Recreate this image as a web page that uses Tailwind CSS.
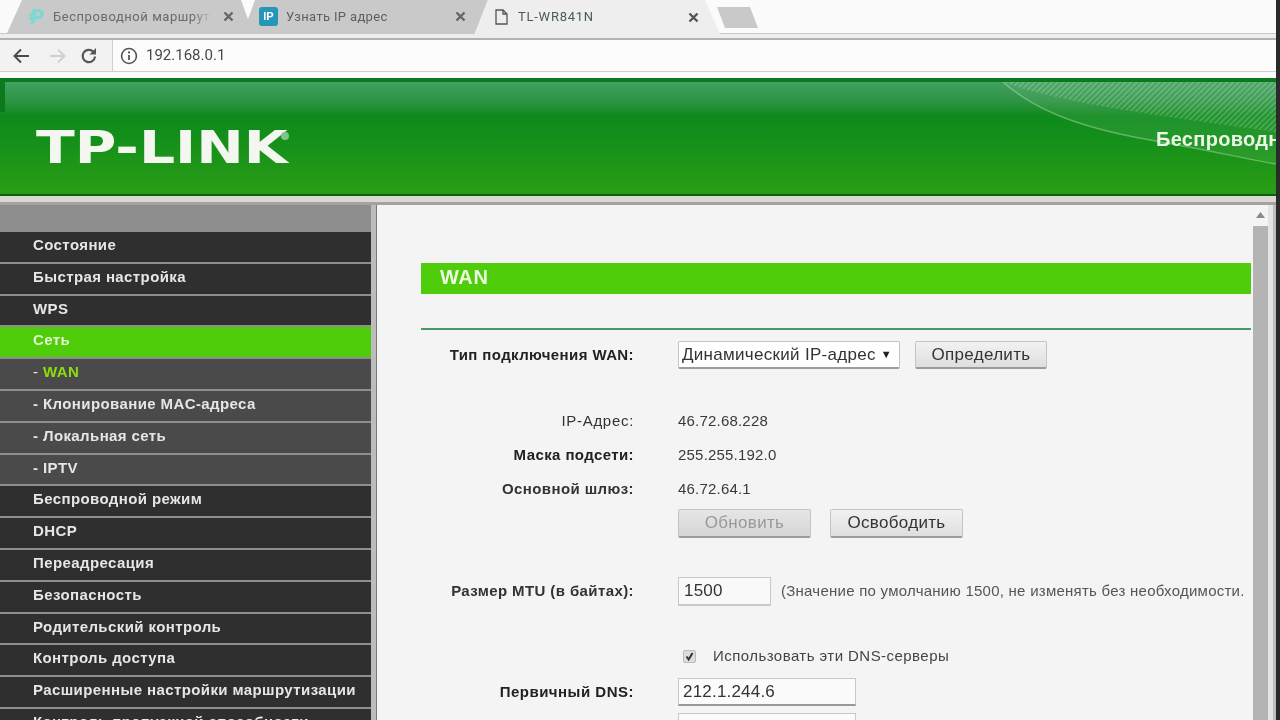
<!DOCTYPE html>
<html lang="ru">

<head>
    <meta charset="UTF-8">
    <script src="https://cdn.jsdelivr.net/npm/@tailwindcss/browser@4"></script>
    <title>TL-WR841N</title>
</head>

<body class="w-[1280px] h-[720px] overflow-hidden bg-[#2a2a2a] font-['Liberation_Sans',sans-serif]">
    <div class="flex h-[720px] blur-[0.35px]">
        <div class="w-[1276px] h-[720px] flex flex-col overflow-hidden bg-white">

            <!-- tabs -->
            <div class="relative flex h-[34px] shrink-0 bg-[#fbfbfb] border-b border-[#c9c9c9] font-['Roboto',sans-serif] text-[13px]">
                <div class="relative ml-[7px] w-[246px] h-[33px] shrink-0 bg-[#c9c9c9] flex items-center pl-[19px] text-[#6a6a6a] [clip-path:polygon(15px_0,234px_0,246px_100%,0_100%)]">
                    <svg class="w-[20px] h-[20px] shrink-0" viewBox="0 0 20 20"><path d="M7 2h6a5 5 0 0 1 0 10h-3l-1 3-3 3-2-2 2-3-4-1 3-3-3-1 3-2z" fill="#7fd8d2"/><circle cx="12" cy="7" r="2" fill="#c9c9c9"/></svg>
                    <span class="ml-[7px] w-[159px] overflow-hidden whitespace-nowrap tracking-[0.55px] [mask-image:linear-gradient(90deg,#000_88%,transparent)]">Беспроводной маршрутизатор</span>
                    <svg class="ml-[11px] w-[11px] h-[11px]" viewBox="0 0 11 11"><path d="M1.5 1.5l8 8M9.5 1.5l-8 8" stroke="#666" stroke-width="2.4"/></svg>
                </div>
                <div class="relative ml-[-10px] w-[245px] h-[33px] shrink-0 bg-[#c9c9c9] flex items-center pl-[16px] text-[#5f5f5f] [clip-path:polygon(12px_0,245px_0,232px_100%,0_100%)]">
                    <div class="w-[19px] h-[19px] shrink-0 rounded-[3px] bg-[#2496b8] text-white text-[11px] font-bold leading-[19px] text-center font-['Liberation_Sans',sans-serif]">IP</div>
                    <span class="ml-[8px] w-[170px] whitespace-nowrap tracking-[0.35px]">Узнать IP адрес</span>
                    <svg class="ml-[-1px] w-[11px] h-[11px] shrink-0" viewBox="0 0 11 11"><path d="M1.5 1.5l8 8M9.5 1.5l-8 8" stroke="#666" stroke-width="2.4"/></svg>
                </div>
                <div class="relative z-10 ml-[-13px] w-[245px] h-[34px] shrink-0 bg-[#eeeeee] flex items-center pl-[20px] text-[#4c5a60] [clip-path:polygon(13px_0,230px_0,245px_100%,0_100%)]">
                    <svg class="w-[13px] h-[16px] shrink-0" viewBox="0 0 13 16"><path d="M1 1h7l4 4v10H1zM8 1v4h4" fill="none" stroke="#555" stroke-width="1.3"/></svg>
                    <span class="ml-[10px] w-[170px] whitespace-nowrap tracking-[0.75px]">TL-WR841N</span>
                    <svg class="w-[11px] h-[11px] shrink-0" viewBox="0 0 11 11"><path d="M1.5 1.5l8 8M9.5 1.5l-8 8" stroke="#555" stroke-width="2.4"/></svg>
                </div>
                <div class="ml-[-3px] mt-[7px] w-[41px] h-[21px] bg-[#c9c9c9] [clip-path:polygon(0_0,33px_0,41px_100%,8px_100%)]"></div>
            </div>
            <div class="h-[4px] shrink-0 bg-[#eeeeee]"></div>
            <div class="h-[2px] shrink-0 bg-[#b2b2b2]"></div>

            <!-- toolbar -->
            <div class="flex items-stretch h-[32px] shrink-0 bg-[#f2f2f2] border-b border-[#d4ccd0]">
                <div class="w-[112px] flex items-center shrink-0">
                    <svg class="ml-[12px] w-[18px] h-[16px]" viewBox="0 0 18 16"><path d="M17 8H3M9 1.5L2.5 8 9 14.5" fill="none" stroke="#4a4a4a" stroke-width="2"/></svg>
                    <svg class="ml-[19px] w-[18px] h-[16px]" viewBox="0 0 18 16"><path d="M1 8h14M9 1.5L15.5 8 9 14.5" fill="none" stroke="#cfcfcf" stroke-width="2"/></svg>
                    <svg class="ml-[13px] w-[18px] h-[18px]" viewBox="0 0 18 18"><path d="M15 9.5A6.2 6.2 0 1 1 13.2 4.6" fill="none" stroke="#555" stroke-width="2.2"/><path d="M16 1v6.5H9.5z" fill="#555"/></svg>
                </div>
                <div class="flex-1 flex items-center bg-[#fcfcfc] border-l border-[#cfcfcf] text-[15px] text-[#484848] font-['Roboto',sans-serif]">
                    <svg class="ml-[7px] w-[18px] h-[18px]" viewBox="0 0 16 16"><circle cx="8" cy="8" r="6.6" fill="none" stroke="#555" stroke-width="1.4"/><path d="M8 7v4.5" stroke="#555" stroke-width="1.6"/><circle cx="8" cy="4.8" r="1" fill="#555"/></svg>
                    <span class="ml-[8px]">192.168.0.1</span>
                </div>
            </div>
            <div class="h-[6px] shrink-0 bg-[#fbfbfb]"></div>

            <!-- router header -->
            <div class="relative h-[118px] shrink-0 overflow-hidden border-t-[4px] border-b-[2px] border-t-[#0b7a1c] border-b-[#0a5f10] bg-[linear-gradient(#41a05f,#2f9546_18px,#0e8a1c_34px,#15901a_60px,#2a9d14)]">
                <div class="absolute left-0 top-0 w-[5px] h-[30px] bg-[#0b7a1c]"></div>
                <svg class="absolute left-[1000px] top-0 w-[276px] h-[112px]" viewBox="0 0 276 112">
                    <defs>
                        <pattern id="hatch" width="4" height="4" patternUnits="userSpaceOnUse" patternTransform="rotate(45)">
                            <rect width="2" height="4" fill="#fff" opacity="0.18"/>
                        </pattern>
                    </defs>
                    <path d="M3 0C30 24 70 44 150 58S250 78 276 82V0z" fill="#fff" opacity="0.07"/>
                    <path d="M3 0C70 24 180 36 276 50V0z" fill="url(#hatch)"/>
                    <path d="M3 0C30 24 70 44 150 58S250 78 276 82" fill="none" stroke="#fff" stroke-width="1.5" opacity="0.3"/>
                </svg>
                <div class="absolute left-[36px] top-[41px] origin-left scale-x-[1.29] font-['DejaVu_Sans',sans-serif] font-bold text-[44px] leading-[50px] text-[#f4f6f0] whitespace-nowrap">TP-LINK</div>
                <div class="absolute left-[281px] top-[50px] w-[8px] h-[8px] rounded-full bg-[#7fc48a]"></div>
                <div class="absolute left-[1156px] top-[42px] w-[120px] overflow-hidden whitespace-nowrap font-bold text-[20px] tracking-[0.3px] text-[#eaf7e4]">Беспроводной маршрутизатор</div>
            </div>
            <div class="h-[6px] shrink-0 bg-[#d9d9d2]"></div>
            <div class="h-[3px] shrink-0 bg-[#a2a2a2]"></div>

            <div class="flex flex-1 min-h-0">
                <!-- menu -->
                <div class="w-[371px] shrink-0 pt-[27px] bg-[#8e8e8e] text-[15px] font-bold tracking-[0.4px] text-[#e6e6e6] overflow-hidden">
                    <div class="h-[31.8px] border-b-2 border-[#8e8e8e] bg-[#2f2f2f] pl-[33px] leading-[26px]">Состояние</div>
                    <div class="h-[31.8px] border-b-2 border-[#8e8e8e] bg-[#2f2f2f] pl-[33px] leading-[26px]">Быстрая настройка</div>
                    <div class="h-[31.8px] border-b-2 border-[#8e8e8e] bg-[#2f2f2f] pl-[33px] leading-[26px]">WPS</div>
                    <div class="h-[31.8px] border-b-2 border-[#8e8e8e] bg-[#4fcc0a] pl-[33px] leading-[26px] text-[#e3f7d0]">Сеть</div>
                    <div class="h-[31.8px] border-b-2 border-[#8e8e8e] bg-[#4a4a4a] pl-[33px] leading-[26px]"><span class="font-normal">- </span><span class="text-[#8fdc10]">WAN</span></div>
                    <div class="h-[31.8px] border-b-2 border-[#8e8e8e] bg-[#4a4a4a] pl-[33px] leading-[26px]">- Клонирование MAC-адреса</div>
                    <div class="h-[31.8px] border-b-2 border-[#8e8e8e] bg-[#4a4a4a] pl-[33px] leading-[26px]">- Локальная сеть</div>
                    <div class="h-[31.8px] border-b-2 border-[#8e8e8e] bg-[#4a4a4a] pl-[33px] leading-[26px]">- IPTV</div>
                    <div class="h-[31.8px] border-b-2 border-[#8e8e8e] bg-[#2f2f2f] pl-[33px] leading-[26px]">Беспроводной режим</div>
                    <div class="h-[31.8px] border-b-2 border-[#8e8e8e] bg-[#2f2f2f] pl-[33px] leading-[26px]">DHCP</div>
                    <div class="h-[31.8px] border-b-2 border-[#8e8e8e] bg-[#2f2f2f] pl-[33px] leading-[26px]">Переадресация</div>
                    <div class="h-[31.8px] border-b-2 border-[#8e8e8e] bg-[#2f2f2f] pl-[33px] leading-[26px]">Безопасность</div>
                    <div class="h-[31.8px] border-b-2 border-[#8e8e8e] bg-[#2f2f2f] pl-[33px] leading-[26px]">Родительский контроль</div>
                    <div class="h-[31.8px] border-b-2 border-[#8e8e8e] bg-[#2f2f2f] pl-[33px] leading-[26px]">Контроль доступа</div>
                    <div class="h-[31.8px] border-b-2 border-[#8e8e8e] bg-[#2f2f2f] pl-[33px] leading-[26px]">Расширенные настройки маршрутизации</div>
                    <div class="h-[31.8px] border-b-2 border-[#8e8e8e] bg-[#2f2f2f] pl-[33px] leading-[26px]">Контроль пропускной способности</div>
                </div>
                <div class="w-[6px] shrink-0 bg-[#bcbcbc] border-r border-[#777]"></div>

                <!-- wan form -->
                <div class="w-[876px] shrink-0 bg-[#f4f4f4] pl-[44px] pt-[58px] text-[15px] tracking-[0.2px] text-[#3a3a3a]">
                    <div class="w-[830px] h-[31px] bg-[#4fcc0a] pl-[19px] text-[20px] font-bold tracking-[0.6px] leading-[28px] text-[#eef9e4]">WAN</div>
                    <div class="w-[830px] h-[2px] mt-[34px] bg-[#4a9a60]"></div>

                    <div class="mt-[11px] flex items-center h-[28px]">
                        <div class="w-[213px] text-right font-bold tracking-[0.4px] text-[#222]">Тип подключения WAN:</div>
                        <div class="ml-[44px] w-[222px] h-[28px] flex items-center justify-between px-[3px] bg-white border border-[#c4c4c4] border-b-2 border-b-[#9c9c9c] rounded-[2px] text-[17px] tracking-[0.3px] text-[#333]">
                            <span>Динамический IP-адрес</span><span class="mr-[4px] text-[11px] text-[#222]">▼</span>
                        </div>
                        <div class="ml-[15px] w-[132px] h-[28px] flex items-center justify-center bg-[linear-gradient(#f2f2f2,#dedede)] border border-[#c4c4c4] border-b-2 border-b-[#9c9c9c] rounded-[2px] text-[17px] tracking-[0.3px] text-[#333]">Определить</div>
                    </div>

                    <div class="mt-[35px] flex items-center h-[34px]">
                        <div class="w-[213px] text-right tracking-[0.7px] text-[#333]">IP-Адрес:</div>
                        <div class="ml-[44px]">46.72.68.228</div>
                    </div>
                    <div class="flex items-center h-[34px]">
                        <div class="w-[213px] text-right font-bold tracking-[0.4px] text-[#222]">Маска подсети:</div>
                        <div class="ml-[44px]">255.255.192.0</div>
                    </div>
                    <div class="flex items-center h-[34px]">
                        <div class="w-[213px] text-right font-bold tracking-[0.4px] text-[#333]">Основной шлюз:</div>
                        <div class="ml-[44px]">46.72.64.1</div>
                    </div>
                    <div class="mt-[3px] ml-[257px] flex gap-[19px]">
                        <div class="w-[133px] h-[29px] flex items-center justify-center bg-[linear-gradient(#e6e6e6,#d6d6d6)] border border-[#c4c4c4] border-b-2 border-b-[#9c9c9c] rounded-[2px] text-[17px] tracking-[0.3px] text-[#999]">Обновить</div>
                        <div class="w-[133px] h-[29px] flex items-center justify-center bg-[linear-gradient(#f2f2f2,#dedede)] border border-[#c4c4c4] border-b-2 border-b-[#9c9c9c] rounded-[2px] text-[17px] tracking-[0.3px] text-[#333]">Освободить</div>
                    </div>

                    <div class="mt-[39px] flex items-center h-[29px]">
                        <div class="w-[213px] text-right font-bold tracking-[0.4px] text-[#333]">Размер MTU (в байтах):</div>
                        <div class="ml-[44px] w-[93px] h-[29px] flex items-center px-[5px] bg-[#f9f9f9] border border-[#c8c8c8] border-b-2 text-[17px] text-[#333]">1500</div>
                        <div class="ml-[10px] whitespace-nowrap tracking-[0.25px] text-[#555]">(Значение по умолчанию 1500, не изменять без необходимости.</div>
                    </div>

                    <div class="mt-[43px] ml-[262px] flex items-center h-[14px]">
                        <div class="w-[13px] h-[13px] flex items-center justify-center bg-[#ddd] border border-[#bbb] rounded-[2px]">
                            <svg class="w-[11px] h-[11px]" viewBox="0 0 11 11"><path d="M2.5 5.5l2.2 3L8.5 2" fill="none" stroke="#333" stroke-width="2"/></svg>
                        </div>
                        <div class="ml-[17px] tracking-[0.45px] text-[#444]">Использовать эти DNS-серверы</div>
                    </div>

                    <div class="mt-[15px] flex items-center h-[28px]">
                        <div class="w-[213px] text-right font-bold tracking-[0.5px] text-[#222]">Первичный DNS:</div>
                        <div class="ml-[44px] w-[178px] h-[28px] flex items-center px-[4px] bg-[#fbfbfb] border border-[#c8c8c8] border-b-2 border-b-[#999] text-[17px] text-[#333]">212.1.244.6</div>
                    </div>
                    <div class="mt-[7px] flex items-start h-[28px]">
                        <div class="w-[213px] pt-[3px] text-right font-bold tracking-[0.5px] text-[#222]">Вторичный DNS:</div>
                        <div class="ml-[44px] w-[178px] h-[28px] flex items-center px-[4px] bg-[#fbfbfb] border border-[#c8c8c8] text-[17px] text-[#333]">0.0.0.0</div>
                        <div class="ml-[13px] pt-[3px] text-[#555]">(Необязательно)</div>
                    </div>
                </div>

                <!-- scrollbar -->
                <div class="w-[15px] shrink-0 bg-[#f4f4f4] flex flex-col items-center">
                    <svg class="mt-[7px] w-[9px] h-[6px]" viewBox="0 0 9 6"><path d="M4.5 0L9 6H0z" fill="#8a8a8a"/></svg>
                    <div class="mt-[8px] w-[15px] flex-1 bg-[#b4b4b4]"></div>
                </div>
                <div class="w-[8px] shrink-0 bg-[#e4e4e4] border-r-[3px] border-[#bdbdbd]"></div>
            </div>
        </div>
        <div class="w-[4px] h-[720px] bg-[#2a2a2a]"></div>
    </div>
</body>

</html>
